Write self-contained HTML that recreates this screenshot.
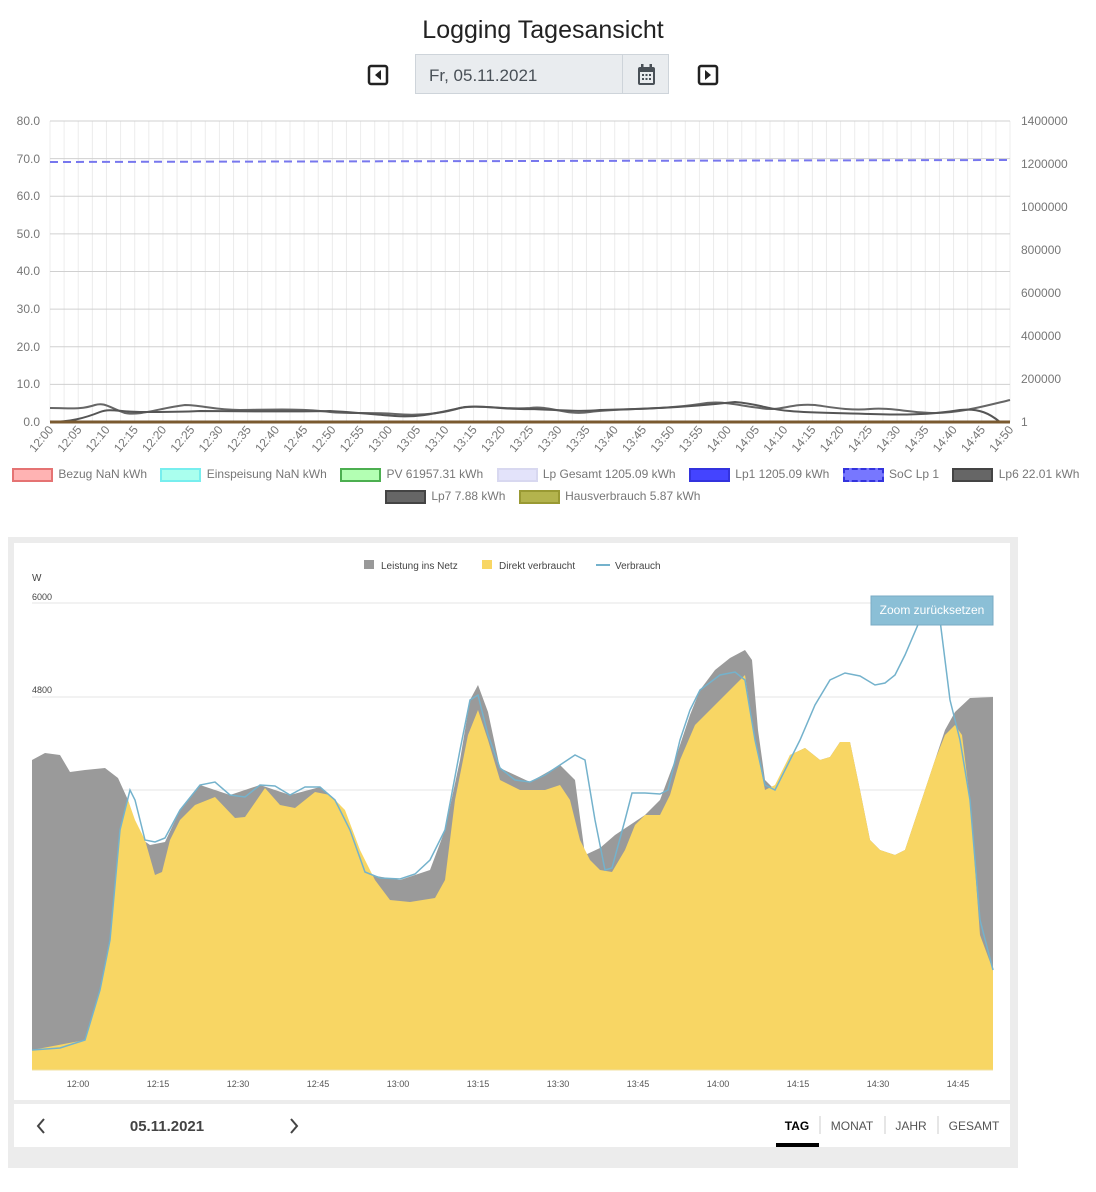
<!DOCTYPE html>
<html><head><meta charset="utf-8"><style>
body{margin:0;width:1096px;height:1192px;background:#fff;font-family:"Liberation Sans",sans-serif;position:relative;overflow:hidden}
.abs{position:absolute}
.lg span.b{display:inline-block;width:37px;height:10px;vertical-align:middle;margin-right:2px}
.lg i{display:inline-block;width:10px}
</style></head><body>
<div class="abs" style="left:0;width:1086px;top:16px;text-align:center;font-size:25px;color:#222">Logging Tagesansicht</div>
<svg class="abs" style="left:367px;top:64px" width="22" height="22"><rect x="2" y="2" width="18" height="18" rx="2" fill="none" stroke="#222" stroke-width="2.5"/><path d="M14 6 L8 11 L14 16Z" fill="#222"/></svg>
<svg class="abs" style="left:697px;top:64px" width="22" height="22"><rect x="2" y="2" width="18" height="18" rx="2" fill="none" stroke="#222" stroke-width="2.5"/><path d="M8 6 L14 11 L8 16Z" fill="#222"/></svg>
<div class="abs" style="left:415px;top:54px;width:254px;height:40px;background:#e9ecef;border:1px solid #ced4da;box-sizing:border-box"></div>
<div class="abs" style="left:622px;top:54px;width:1px;height:40px;background:#ced4da"></div>
<div class="abs" style="left:429px;top:66px;font-size:17px;color:#495057">Fr, 05.11.2021</div>
<svg class="abs" style="left:636px;top:63px" width="22" height="24"><rect x="2" y="4" width="17" height="18" rx="2" fill="#495057"/><rect x="4" y="9" width="13" height="11" fill="#e9ecef"/><rect x="5" y="1" width="2.5" height="5" fill="#495057"/><rect x="13.5" y="1" width="2.5" height="5" fill="#495057"/><g fill="#495057"><rect x="6" y="11" width="2" height="2"/><rect x="9.5" y="11" width="2" height="2"/><rect x="13" y="11" width="2" height="2"/><rect x="6" y="15" width="2" height="2"/><rect x="9.5" y="15" width="2" height="2"/><rect x="13" y="15" width="2" height="2"/></g></svg>

<svg class="abs" style="left:0;top:100px" width="1096" height="410" font-family="Liberation Sans" font-size="12" fill="#777">
<g stroke="#ececec" stroke-width="1" id="vg"></g>
<g stroke="#d0d0d0">
<line x1="50" y1="21" x2="1010" y2="21"/><line x1="50" y1="58.6" x2="1010" y2="58.6"/><line x1="50" y1="96.3" x2="1010" y2="96.3"/><line x1="50" y1="133.9" x2="1010" y2="133.9"/><line x1="50" y1="171.5" x2="1010" y2="171.5"/><line x1="50" y1="209.1" x2="1010" y2="209.1"/><line x1="50" y1="246.8" x2="1010" y2="246.8"/><line x1="50" y1="284.4" x2="1010" y2="284.4"/><line x1="50" y1="322" x2="1010" y2="322"/>
</g>
<g text-anchor="end"><text x="40" y="25">80.0</text><text x="40" y="63">70.0</text><text x="40" y="100">60.0</text><text x="40" y="138">50.0</text><text x="40" y="175">40.0</text><text x="40" y="213">30.0</text><text x="40" y="251">20.0</text><text x="40" y="288">10.0</text><text x="40" y="326">0.0</text></g>
<g><text x="1021" y="25">1400000</text><text x="1021" y="68">1200000</text><text x="1021" y="111">1000000</text><text x="1021" y="154">800000</text><text x="1021" y="197">600000</text><text x="1021" y="240">400000</text><text x="1021" y="283">200000</text><text x="1021" y="326">1</text></g>
<path d="M50 62 L1010 60" stroke="#7777ee" stroke-width="2" stroke-dasharray="8,5" fill="none"/>
<path d="M50 308 C70 308 80 310 95 305 C105 302 110 308 125 313 C140 316 160 308 185 305 C200 305 215 310 240 310 C260 310 300 308 330 312 C350 314 370 312 395 314 C420 316 440 314 460 308 C480 304 500 310 530 308 C550 305 565 316 590 312 C620 308 660 310 700 304 C720 300 735 305 760 308 C780 312 790 303 815 305 C830 307 850 311 870 309 C890 307 910 313 935 313 C960 313 985 306 1010 300" stroke="#666" stroke-width="2" fill="none"/>
<path d="M50 322 C70 322 85 318 100 312 C110 308 120 312 140 312 C160 312 180 312 200 311 C240 311 280 312 330 311 C350 312 370 314 395 316 C420 318 440 312 465 307 C485 305 505 310 530 309 C560 310 580 312 600 310 C640 309 680 308 735 302 C760 304 770 310 790 311 C810 313 840 313 870 314 C900 315 930 315 960 310 C980 308 990 314 1000 322" stroke="#555" stroke-width="2" fill="none"/>
<line x1="50" y1="322" x2="1010" y2="322" stroke="#7a5a30" stroke-width="3"/>
<g id="xl" font-size="12"></g>
</svg>
<script>
var vg=document.getElementById('vg'),s='';
for(var i=0;i<=68;i++){var x=50+i*960/68;s+='<line x1="'+x+'" y1="21" x2="'+x+'" y2="322"/>';}
vg.innerHTML=s;
var xl=document.getElementById('xl'),t='';
for(var i=0;i<=34;i++){var m=i*5,h=12+Math.floor(m/60),mm=m%60;var lab=h+':'+(mm<10?'0':'')+mm;var x=50+i*960/34;
t+='<text transform="translate('+(x+4)+',330) rotate(-50)" text-anchor="end">'+lab+'</text>';}
xl.innerHTML=t;
</script>

<div class="abs lg" style="top:466px;left:12px;font-size:12px;color:#777;white-space:nowrap;line-height:16px">
<span class="b" style="background:#ffb3b3;border:2px solid #e57373"></span> Bezug NaN kWh<i></i>
<span class="b" style="background:#aaffee;border:2px solid #7ee"></span> Einspeisung NaN kWh<i></i>
<span class="b" style="background:#b3ffb3;border:2px solid #4caf50"></span> PV 61957.31 kWh<i></i>
<span class="b" style="background:#e3e3fa;border:2px solid #d8d8f0"></span> Lp Gesamt 1205.09 kWh<i></i>
<span class="b" style="background:#4444ff;border:2px solid #3333dd"></span> Lp1 1205.09 kWh<i></i>
<span class="b" style="background:#7777ff;border:2px dashed #3333dd"></span> SoC Lp 1<i></i>
<span class="b" style="background:#666;border:2px solid #444"></span> Lp6 22.01 kWh
</div>
<div class="abs lg" style="top:488px;left:385px;font-size:12px;color:#777;white-space:nowrap;line-height:16px">
<span class="b" style="background:#666;border:2px solid #444"></span> Lp7 7.88 kWh<i></i>
<span class="b" style="background:#b3b34d;border:2px solid #999933"></span> Hausverbrauch 5.87 kWh
</div>

<div class="abs" style="left:8px;top:537px;width:1010px;height:631px;background:#ececec"></div>
<div class="abs" style="left:14px;top:543px;width:996px;height:557px;background:#fff"></div>
<div class="abs" style="left:14px;top:1104px;width:996px;height:43px;background:#fff"></div>

<svg class="abs" style="left:0;top:0" width="1096" height="1192" font-family="Liberation Sans" font-size="10" fill="#444">
<g stroke="#e6e6e6"><line x1="32" y1="603" x2="993" y2="603"/><line x1="32" y1="697" x2="993" y2="697"/><line x1="32" y1="790" x2="993" y2="790"/><line x1="32" y1="883" x2="993" y2="883"/><line x1="32" y1="977" x2="993" y2="977"/></g>
<rect x="364" y="560" width="10" height="9" fill="#999"/><text x="381" y="569">Leistung ins Netz</text>
<rect x="482" y="560" width="10" height="9" fill="#f8d664"/><text x="499" y="569">Direkt verbraucht</text>
<line x1="596" y1="565" x2="610" y2="565" stroke="#74b2cc" stroke-width="2"/><text x="615" y="569">Verbrauch</text>
<text x="32" y="581">W</text>
<g font-size="9"><text x="32" y="600">6000</text><text x="32" y="693">4800</text><text x="32" y="787">3600</text><text x="32" y="880">2400</text><text x="32" y="973">1200</text><text x="32" y="1067">0</text></g>
<polygon fill="#9a9a9a" points="32,1070 32,760 45,753 60,755 70,772 85,770 105,768 118,778 128,800 140,838 150,845 165,842 180,810 200,785 230,795 260,785 290,795 320,787 340,805 355,840 370,875 400,880 430,870 445,830 460,760 470,700 478,685 488,712 500,768 530,782 560,765 575,780 585,855 600,848 615,835 630,825 645,815 660,800 675,760 690,715 700,690 715,670 730,658 745,650 752,660 758,730 765,780 775,790 790,755 805,748 820,760 830,757 840,742 850,742 860,790 870,840 880,850 895,855 905,850 920,805 935,760 945,730 955,712 970,698 993,697 993,1070"/>
<polygon fill="#f8d664" points="32,1070 32,1050 85,1040 100,990 110,940 120,830 128,800 135,820 145,840 155,875 162,872 170,840 180,820 195,805 215,797 235,818 245,817 265,788 280,805 295,808 315,792 330,795 345,810 360,850 375,880 390,900 410,902 435,898 445,880 455,800 468,735 478,710 488,740 500,780 520,790 545,790 560,785 570,800 580,840 590,860 600,870 612,872 625,850 635,825 645,815 660,815 670,795 680,760 695,725 715,705 735,685 745,675 755,740 765,790 775,785 790,755 805,748 820,760 830,757 840,742 850,742 860,790 870,840 880,850 895,855 905,850 920,805 935,760 945,735 955,725 962,735 970,800 980,935 993,970 993,1070"/>
<polyline fill="none" stroke="#74b2cc" stroke-width="1.5" points="32,1050 60,1048 85,1040 100,990 110,940 120,830 130,790 135,800 145,840 155,842 165,838 180,810 200,785 215,782 230,795 245,797 260,785 275,786 290,795 305,787 320,787 335,800 350,830 365,872 380,878 400,879 415,874 430,860 445,830 460,750 470,700 478,695 488,735 500,768 515,780 530,782 545,775 560,765 575,755 585,760 595,820 605,870 612,868 625,820 632,793 645,793 660,794 668,790 680,740 690,710 700,690 720,675 735,672 745,680 755,740 765,785 775,790 790,760 800,740 815,705 830,680 845,673 860,676 875,685 885,683 895,675 905,655 920,620 930,605 940,620 950,700 960,740 970,800 980,920 993,970"/>
<line x1="32" y1="1070" x2="993" y2="1070" stroke="#f0e0a0"/>
<g font-size="9" fill="#555" text-anchor="middle"><text x="78" y="1087">12:00</text><text x="158" y="1087">12:15</text><text x="238" y="1087">12:30</text><text x="318" y="1087">12:45</text><text x="398" y="1087">13:00</text><text x="478" y="1087">13:15</text><text x="558" y="1087">13:30</text><text x="638" y="1087">13:45</text><text x="718" y="1087">14:00</text><text x="798" y="1087">14:15</text><text x="878" y="1087">14:30</text><text x="958" y="1087">14:45</text></g>
<rect x="871" y="596" width="122" height="29" fill="#8bbfd6" stroke="#78abc4"/>
<text x="932" y="614" fill="#fff" font-size="12" text-anchor="middle">Zoom zurücksetzen</text>
<path d="M44 1119 L38 1126 L44 1133" fill="none" stroke="#444" stroke-width="2"/>
<path d="M291 1119 L297 1126 L291 1133" fill="none" stroke="#444" stroke-width="2"/>
<text x="167" y="1131" font-size="15" font-weight="bold" fill="#444" text-anchor="middle">05.11.2021</text>
<text x="797" y="1130" font-size="12" font-weight="bold" fill="#000" text-anchor="middle">TAG</text>
<rect x="776" y="1143" width="43" height="4" fill="#000"/>
<g stroke="#ccc"><line x1="820" y1="1116" x2="820" y2="1134"/><line x1="885" y1="1116" x2="885" y2="1134"/><line x1="938" y1="1116" x2="938" y2="1134"/></g>
<g font-size="12" fill="#555" text-anchor="middle"><text x="852" y="1130">MONAT</text><text x="911" y="1130">JAHR</text><text x="974" y="1130">GESAMT</text></g>
</svg>
</body></html>
